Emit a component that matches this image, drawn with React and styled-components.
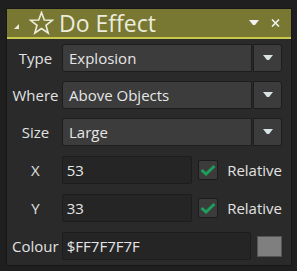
import styled, { createGlobalStyle } from "styled-components";

const GlobalStyle = createGlobalStyle`
    body {
        margin: 0;
        background-color: #1f1f1f;
        font-family: "Open Sans", "Noto Sans", sans-serif;
    }
`

const Panel = styled.div`
    margin: 8px 0 0 6px;
    width: 286px;
    height: 258px;
    box-sizing: border-box;
    border: 1px solid #171717;
    background-color: #2a2a2a;
    display: flex;
    flex-direction: column;
`

const Header = styled.div`
    height: 28px;
    background-color: #787832;
    border-bottom: 2px solid #c8c84c;
    display: flex;
    align-items: center;
    color: #ececdc;
`

const Collapse = styled.div`
    width: 0;
    height: 0;
    margin: 6px 0 0 7px;
    border-left: 5px solid transparent;
    border-bottom: 5px solid #ececdc;
`

const Title = styled.div`
    font-size: 23px;
    margin-left: 5px;
    line-height: 28px;
    flex: 1;
`

const HeaderButton = styled.div`
    width: 16px;
    display: flex;
    justify-content: center;
    align-items: center;
    margin-right: ${(p) => p.gap}px;
`

const Body = styled.div`
    padding: 5px 9px 0 2px;
    display: flex;
    flex-direction: column;
    gap: 9px;
`

const Row = styled.div`
    height: 28px;
    display: flex;
    align-items: center;
    margin-top: ${(p) => p.offset || 0}px;
`

const Label = styled.div`
    width: 53px;
    text-align: center;
    font-size: 15px;
    color: #e2e2e2;
`

const Select = styled.div`
    flex: 1;
    height: 100%;
    display: flex;
    gap: 1px;
`

const SelectValue = styled.div`
    flex: 1;
    box-sizing: border-box;
    border: 1px solid #1d1d1d;
    border-radius: 3px 0 0 3px;
    background-color: #3c3c3c;
    color: #e6e6e6;
    font-size: 15px;
    line-height: 26px;
    padding-left: 6px;
`

const SelectArrow = styled.div`
    width: 29px;
    box-sizing: border-box;
    border: 1px solid #1d1d1d;
    border-radius: 0 3px 3px 0;
    background-color: #3c3c3c;
    display: flex;
    align-items: center;
    justify-content: center;
`

const Input = styled.div`
    width: ${(p) => p.width}px;
    height: 100%;
    box-sizing: border-box;
    border: 1px solid #1d1d1d;
    border-radius: 2px;
    background-color: #252525;
    color: #e6e6e6;
    font-size: 15px;
    line-height: 26px;
    padding-left: 4px;
`

const Check = styled.div`
    width: 20px;
    height: 20px;
    box-sizing: border-box;
    margin-left: 6px;
    border: 1px solid #1b1b1b;
    border-radius: 2px;
    background-color: #3b3b3b;
    display: flex;
    align-items: center;
    justify-content: center;
`

const CheckLabel = styled.div`
    margin-left: 9px;
    font-size: 15px;
    color: #e2e2e2;
`

const Swatch = styled.div`
    width: 25px;
    height: 21px;
    box-sizing: border-box;
    margin-left: 6px;
    border: 1px solid #555555;
    background-color: ${(p) => p.colour};
`

const Arrow = ({ color = "#e8e8e8" }) => (
    <svg width="10" height="6" viewBox="0 0 10 6">
        <path d="M0 0 H10 L6 5 H4 Z" fill={color} />
    </svg>
)

const Dropdown = ({ value }) => (
    <Select>
        <SelectValue>{value}</SelectValue>
        <SelectArrow><Arrow color="#d8e4e4" /></SelectArrow>
    </Select>
)

const Tick = () => (
    <svg width="16" height="12" viewBox="0 0 16 12">
        <path d="M1.5 6 L6 10 L14.5 2" fill="none" stroke="#1e9e5c" strokeWidth="3" />
    </svg>
)

const App = () => {
    return (
        <>
            <GlobalStyle />
            <Panel>
                <Header>
                    <Collapse />
                    <svg width="25" height="24" viewBox="0 0 25 24" style={{ marginLeft: 10 }}>
                        <path d="M12.5 1.5 L15.3 9 L23.3 9.3 L17 14.3 L19.2 22 L12.5 17.5 L5.8 22 L8 14.3 L1.7 9.3 L9.7 9 Z"
                            fill="none" stroke="#ececdc" strokeWidth="1.6" strokeLinejoin="miter" />
                    </svg>
                    <Title>Do Effect</Title>
                    <HeaderButton gap={5}><Arrow color="#f2f2f2" /></HeaderButton>
                    <HeaderButton gap={8}>
                        <svg width="9" height="8" viewBox="0 0 9 8">
                            <path d="M1 0.5 L8 7.5 M8 0.5 L1 7.5" stroke="#f2f2f2" strokeWidth="1.6" />
                        </svg>
                    </HeaderButton>
                </Header>
                <Body>
                    <Row>
                        <Label>Type</Label>
                        <Dropdown value="Explosion" />
                    </Row>
                    <Row>
                        <Label>Where</Label>
                        <Dropdown value="Above Objects" />
                    </Row>
                    <Row>
                        <Label>Size</Label>
                        <Dropdown value="Large" />
                    </Row>
                    <Row offset={1}>
                        <Label>X</Label>
                        <Input width={131}>53</Input>
                        <Check><Tick /></Check>
                        <CheckLabel>Relative</CheckLabel>
                    </Row>
                    <Row offset={1}>
                        <Label>Y</Label>
                        <Input width={131}>33</Input>
                        <Check><Tick /></Check>
                        <CheckLabel>Relative</CheckLabel>
                    </Row>
                    <Row offset={1}>
                        <Label>Colour</Label>
                        <Input width={190}>$FF7F7F7F</Input>
                        <Swatch colour="#7f7f7f" />
                    </Row>
                </Body>
            </Panel>
        </>
    )
}

export default App;
